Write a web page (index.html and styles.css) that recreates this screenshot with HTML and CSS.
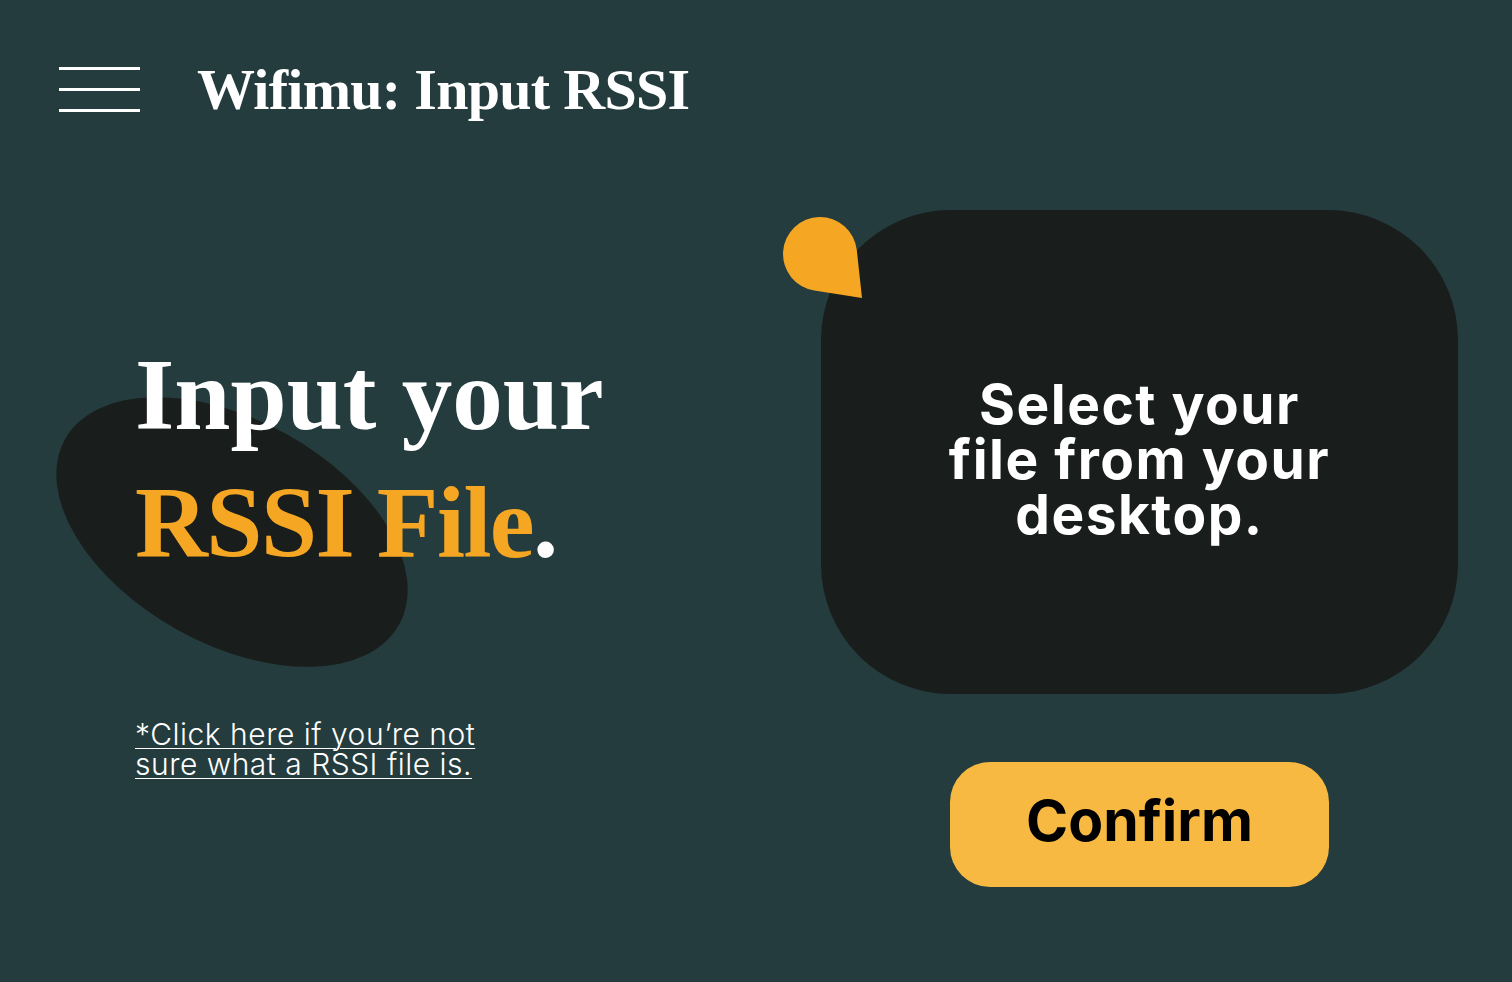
FILE: index.html
```html
<!DOCTYPE html>
<html lang="en">
<head>
<meta charset="utf-8">
<title>Wifimu: Input RSSI</title>
<link rel="stylesheet" href="styles.css">
</head>
<body>
<div class="page">
  <header class="header">
    <button class="menu" aria-label="Menu">
      <span class="menu-line"></span>
      <span class="menu-line"></span>
      <span class="menu-line"></span>
    </button>
    <h1 class="title">Wifimu: Input RSSI</h1>
  </header>

  <main class="main">
    <section class="intro">
      <h2 class="hero">
        <span class="blob"></span>
        <span class="hero-line">Input your</span>
        <span class="hero-line hero-line-tight"><span class="accent">RSSI File</span>.</span>
      </h2>
      <a class="help-link" href="#">*Click here if you’re not<br>sure what a RSSI file is.</a>
    </section>

    <section class="upload">
      <div class="drop-card">
        <svg class="pin" viewBox="0 0 82 84" width="82" height="84" aria-hidden="true">
          <path d="M74.8 34 L80 82 L32.3 74.6 A37 37 0 1 1 74.8 34 Z" fill="#f5a623"/>
        </svg>
        <p class="drop-text">Select your<br>file from your<br>desktop.</p>
      </div>
      <button class="confirm">Confirm</button>
    </section>
  </main>
</div>
</body>
</html>
```

FILE: styles.css
```css
* { box-sizing: border-box; }

html, body {
  margin: 0;
  padding: 0;
}

body {
  background: #243c3d;
  color: #ffffff;
  font-family: "Inter", "Liberation Sans", sans-serif;
  width: 1512px;
  height: 982px;
  overflow: hidden;
}

.page {
  width: 1512px;
  height: 982px;
}

.header {
  display: flex;
  align-items: flex-start;
  gap: 57px;
  padding: 61px 0 0 59px;
}

.menu {
  display: flex;
  flex-direction: column;
  gap: 18px;
  width: 81px;
  margin-top: 6px;
  padding: 0;
  border: 0;
  background: none;
  cursor: pointer;
}

.menu-line {
  display: block;
  width: 81px;
  height: 3px;
  background: #ffffff;
}

.title {
  margin: 0;
  font-family: "Liberation Serif", "Times New Roman", serif;
  font-weight: 700;
  font-size: 58px;
  line-height: 58px;
  letter-spacing: -0.7px;
  color: #ffffff;
}

.main {
  display: flex;
  justify-content: space-between;
  padding: 0 54px 0 135px;
  margin-top: 91px;
}

.intro {
  display: flex;
  flex-direction: column;
  align-items: flex-start;
}

.hero {
  position: relative;
  margin: 121px 0 0 0;
  font-family: "Liberation Serif", "Times New Roman", serif;
  font-weight: 700;
  font-size: 101px;
  line-height: 128px;
  color: #ffffff;
  white-space: nowrap;
}

.hero-line {
  position: relative;
  display: block;
}

.hero-line-tight {
  letter-spacing: -1.6px;
}

.accent {
  color: #f5a623;
}

.blob {
  position: absolute;
  left: -94px;
  top: 89px;
  width: 382px;
  height: 224px;
  border-radius: 50%;
  background: #191d1c;
  transform: rotate(29deg);
}

.help-link {
  margin-top: 132px;
  font-family: "Inter", "Liberation Sans", sans-serif;
  font-weight: 300;
  font-size: 30px;
  line-height: 30px;
  letter-spacing: 0.5px;
  color: #ffffff;
  text-decoration: underline;
  text-decoration-thickness: 1px;
  text-underline-offset: 3px;
}

.upload {
  display: flex;
  flex-direction: column;
  align-items: center;
  width: 637px;
}

.drop-card {
  position: relative;
  display: flex;
  align-items: center;
  justify-content: center;
  width: 637px;
  height: 484px;
  padding-top: 14px;
  border-radius: 130px;
  background: #191d1c;
}

.pin {
  position: absolute;
  left: -39px;
  top: 6px;
}

.drop-text {
  margin: 0;
  font-family: "Inter", "Liberation Sans", sans-serif;
  font-weight: 700;
  font-size: 55px;
  line-height: 55px;
  letter-spacing: 1.5px;
  text-align: center;
  color: #ffffff;
}

.confirm {
  width: 379px;
  height: 125px;
  margin-top: 68px;
  padding: 0 0 8px 0;
  border: 0;
  border-radius: 40px;
  background: #f7b942;
  color: #000000;
  font-family: "Inter", "Liberation Sans", sans-serif;
  font-weight: 700;
  font-size: 57px;
  cursor: pointer;
}
```
